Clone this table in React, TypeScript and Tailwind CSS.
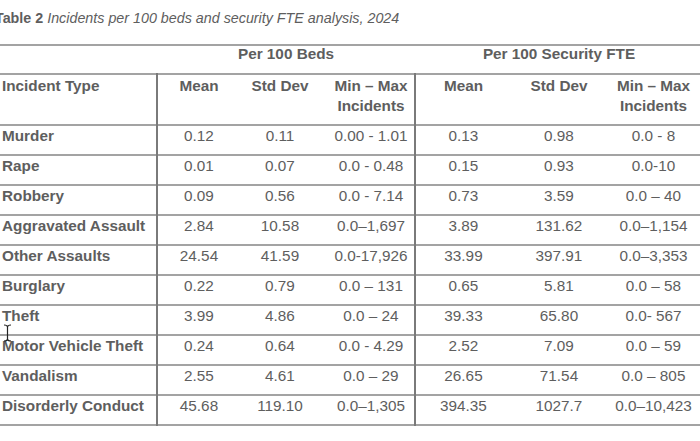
import React from 'react';

const rows: [string, string, string, string, string, string, string][] = [
  ['Murder', '0.12', '0.11', '0.00 - 1.01', '0.13', '0.98', '0.0 - 8'],
  ['Rape', '0.01', '0.07', '0.0 - 0.48', '0.15', '0.93', '0.0-10'],
  ['Robbery', '0.09', '0.56', '0.0 - 7.14', '0.73', '3.59', '0.0 – 40'],
  ['Aggravated Assault', '2.84', '10.58', '0.0–1,697', '3.89', '131.62', '0.0–1,154'],
  ['Other Assaults', '24.54', '41.59', '0.0-17,926', '33.99', '397.91', '0.0–3,353'],
  ['Burglary', '0.22', '0.79', '0.0 – 131', '0.65', '5.81', '0.0 – 58'],
  ['Theft', '3.99', '4.86', '0.0 – 24', '39.33', '65.80', '0.0- 567'],
  ['Motor Vehicle Theft', '0.24', '0.64', '0.0 - 4.29', '2.52', '7.09', '0.0 – 59'],
  ['Vandalism', '2.55', '4.61', '0.0 – 29', '26.65', '71.54', '0.0 – 805'],
  ['Disorderly Conduct', '45.68', '119.10', '0.0–1,305', '394.35', '1027.7', '0.0–10,423'],
];

const hline = 'border-b-2 border-[#a3a3a3]';
const vline = 'border-r-2 border-r-[#7a7a7a]';

export default function App() {
  return (
    <div className="relative w-[700px] h-[441px] overflow-hidden bg-white text-[#5e5e5e] font-['Liberation_Sans',Arial,sans-serif]">
      <div className="h-[44px] pt-[8px] -ml-[5px] leading-5 text-[14.3px] whitespace-nowrap">
        <span className="font-bold">Table 2</span>{' '}
        <span className="italic">Incidents per 100 beds and security FTE analysis, 2024</span>
      </div>
      <table className="w-[703px] table-fixed border-collapse leading-[19px] text-[15.3px]">
        <colgroup>
          <col className="w-[157px]" />
          <col className="w-[83px]" />
          <col className="w-[80px]" />
          <col className="w-[95px]" />
          <col className="w-[96px]" />
          <col className="w-[96px]" />
          <col className="w-[96px]" />
        </colgroup>
        <thead>
          <tr className={`border-t-2 border-t-[#a3a3a3] ${hline} h-[29px]`}>
            <th />
            <th colSpan={3} className="font-bold align-top leading-4 pb-[11px] text-center">
              Per 100 Beds
            </th>
            <th colSpan={3} className="font-bold align-top leading-4 pb-[11px] text-center">
              Per 100 Security FTE
            </th>
          </tr>
          <tr className={`${hline} h-[51px]`}>
            <th className={`${vline} text-left font-bold align-top pl-[2px] pt-[1px] pb-[8px] whitespace-nowrap`}>Incident Type</th>
            <th className="font-bold align-top pt-[1px] text-center">Mean</th>
            <th className="font-bold align-top pt-[1px] text-center">Std Dev</th>
            <th className={`${vline} font-bold align-top pt-[1px] text-center pl-[8px] leading-5`}>
              Min – Max
              <br />
              Incidents
            </th>
            <th className="font-bold align-top pt-[1px] text-center">Mean</th>
            <th className="font-bold align-top pt-[1px] text-center">Std Dev</th>
            <th className="font-bold align-top pt-[1px] text-center pr-[3px] leading-5">
              Min – Max
              <br />
              Incidents
            </th>
          </tr>
        </thead>
        <tbody>
          {rows.map((r) => (
            <tr key={r[0]} className={`${hline} h-[28.2px]`}>
              <td className={`${vline} font-bold align-top pl-[2px] pb-[9px] whitespace-nowrap`}>{r[0]}</td>
              <td className="align-top text-center">{r[1]}</td>
              <td className="align-top text-center">{r[2]}</td>
              <td className={`${vline} align-top text-center pl-[8px] whitespace-nowrap`}>{r[3]}</td>
              <td className="align-top text-center">{r[4]}</td>
              <td className="align-top text-center">{r[5]}</td>
              <td className="align-top text-center pr-[3px] whitespace-nowrap">{r[6]}</td>
            </tr>
          ))}
        </tbody>
      </table>
      {/* text cursor */}
      <svg className="absolute left-[3px] top-[324px]" width="9" height="18" viewBox="0 0 9 18">
        <path d="M1 1 Q4.5 1 4.5 3 L4.5 15 Q4.5 17 1 17 M8 1 Q4.5 1 4.5 3 M8 17 Q4.5 17 4.5 15" stroke="#222" strokeWidth="1.2" fill="none" />
      </svg>
    </div>
  );
}
